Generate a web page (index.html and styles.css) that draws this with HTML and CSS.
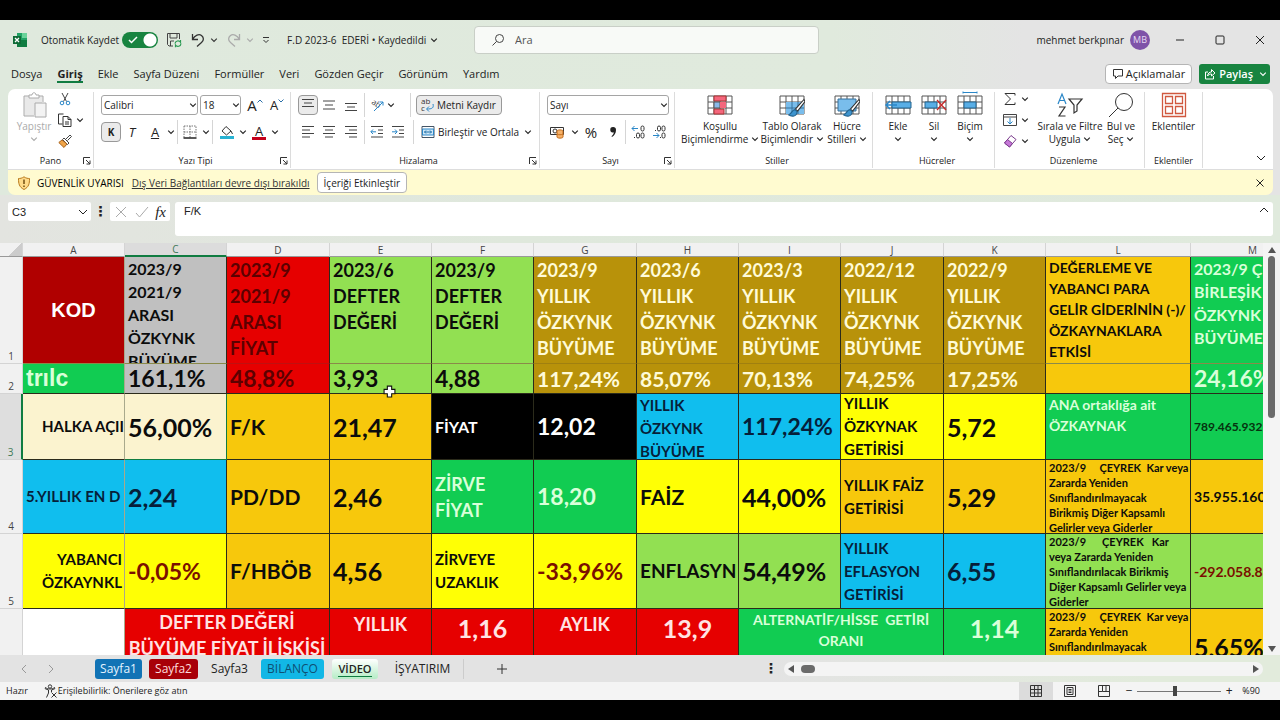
FILE: index.html
```html
<!DOCTYPE html>
<html lang="tr">
<head>
<meta charset="utf-8">
<title>F.D 2023-6 EDERİ</title>
<link rel="stylesheet" href="styles.css">
</head>
<body>
<svg class="defs" aria-hidden="true">
  <symbol id="chev" viewBox="0 0 8 8"><path d="M1.2 2.6 4 5.4 6.8 2.6" fill="none" stroke="currentColor" stroke-width="1.1"/></symbol>
  <symbol id="launch" viewBox="0 0 8 8"><path d="M.5 7V.5H7M3 3l4 4M7 3.5V7H3.5" fill="none" stroke="#333"/></symbol>
  <symbol id="grid" viewBox="0 0 26 20"><path d="M1 1h24v18H1zM1 7h24M1 13h24M7 1v18M13 1v18M19 1v18" fill="#fff" stroke="#555"/></symbol>
  <symbol id="brush" viewBox="0 0 16 18"><path d="M15 1 7 10l2 2 7-9z" fill="#fff" stroke="#333"/><path d="M6.500 10.500c-3 0-2.500 4-6 5 3 2 8 1.500 8-3z" fill="#3d94cf" stroke="#24648f"/></symbol>
</svg>
<div class="window">
  <header class="title">
    <div class="title-left">
      <svg class="i16" viewBox="0 0 16 16"><path d="M5 1h10v14H5z" fill="#21a366"/><path d="M10 1h5v5h-5z" fill="#6ad39a"/><path d="M5 8h10v7H5z" fill="#107c41"/><path d="M1 4h8v8H1z" fill="#0f6b37"/><path d="m3 6 4 4M7 6l-4 4" stroke="#fff" stroke-width="1.300"/></svg>
      <label class="auto" for="autosave">Otomatik Kaydet</label>
      <span class="switch"><input type="checkbox" id="autosave" checked><svg viewBox="0 0 10 8"><path d="m1 4 2.500 2.500L9 1" fill="none" stroke="#fff" stroke-width="1.500"/></svg></span>
      <button class="ic" aria-label="Kaydet"><svg class="i16" viewBox="0 0 16 16"><path d="M7 14H3L1.500 12.500v-11h12V7M4 1.500V6h7V1.500M4.500 14V9H8" fill="none" stroke="#444"/><path d="M9 11.500a3 3 0 0 1 5.500-1.200V8M15 11.500A3 3 0 0 1 9.500 13v2.200" fill="none" stroke="#2c9b54" stroke-width="1.200"/></svg></button>
      <button class="ic undo" aria-label="Geri Al"><svg class="i16" viewBox="0 0 16 16"><path d="M2.500 2v5.500H8M2.500 7.500C5 3 9 1.500 11.500 3.500s2.500 5 0 7L7 14.500" fill="none" stroke="#333" stroke-width="1.300"/></svg><svg class="chev"><use href="#chev"/></svg></button>
      <button class="ic undo pale" aria-label="Yinele"><svg class="i16" viewBox="0 0 16 16"><path d="M13.500 2v5.500H8M13.500 7.500C11 3 7 1.500 4.500 3.500s-2.500 5 0 7L9 14.500" fill="none" stroke="currentColor" stroke-width="1.300"/></svg><svg class="chev"><use href="#chev"/></svg></button>
      <button class="ic" aria-label="Özelleştir"><svg class="chev" viewBox="0 0 8 8"><path d="M1 1.500h6M1.500 4 4 6.500 6.500 4" fill="none" stroke="#333"/></svg></button>
      <button class="doc">F.D 2023-6&nbsp; EDERİ • Kaydedildi <svg class="chev"><use href="#chev"/></svg></button>
    </div>
    <label class="search"><svg class="i14" viewBox="0 0 14 14"><circle cx="8.500" cy="5.500" r="4" fill="none" stroke="#444"/><path d="M5.500 8.500 1.500 12.500" stroke="#444"/></svg><input type="text" placeholder="Ara" aria-label="Ara"></label>
    <div class="title-right">
      <span>mehmet berkpınar</span><span class="avatar">MB</span>
      <button class="win" aria-label="Simge durumu"><svg class="i12" viewBox="0 0 12 12"><path d="M2 6h8" stroke="#222"/></svg></button>
      <button class="win" aria-label="Ekranı kapla"><svg class="i12" viewBox="0 0 12 12"><rect x="2" y="2" width="8" height="8" rx="1" fill="none" stroke="#222"/></svg></button>
      <button class="win" aria-label="Kapat"><svg class="i12" viewBox="0 0 12 12"><path d="m2 2 8 8M10 2l-8 8" stroke="#222"/></svg></button>
    </div>
  </header>
  <nav class="menu">
    <button>Dosya</button><button class="on">Giriş</button><button>Ekle</button><button>Sayfa Düzeni</button><button>Formüller</button><button>Veri</button><button>Gözden Geçir</button><button>Görünüm</button><button>Yardım</button>
    <button class="comments"><svg class="i12" viewBox="0 0 12 12"><path d="M1.500 1.500h9v6.500H6L3.500 10.500V8h-2z" fill="none" stroke="#333"/></svg>Açıklamalar</button>
    <button class="share"><svg class="i12" viewBox="0 0 12 12"><path d="M4 4H1.500v7h8V8M3.500 8c.5-3 2-4 4-4V1.500l3.500 3.500-3.500 3V6c-2 0-3 .5-4 2z" fill="none" stroke="#fff"/></svg>Paylaş<svg class="chev"><use href="#chev"/></svg></button>
  </nav>

  <section class="ribbon">
    <div class="group g-pano">
      <div class="body">
        <button class="big w52 faded"><svg class="i26" viewBox="0 0 26 26"><path d="M9 4H3v20h10M17 4h5v6" fill="#eee" stroke="#aaa"/><path d="M4 5h17v6h-7v12H4z" fill="#e9e9e9"/><path d="M8 6V3h3c0-3 4-3 4 0h3v3z" fill="#fff" stroke="#aaa"/><path d="M14 11h11v14H14z" fill="#f3f3f3" stroke="#aaa"/></svg><span>Yapıştır</span><svg class="chev"><use href="#chev"/></svg></button>
        <div class="stack">
          <button class="s" aria-label="Kes"><svg class="i14" viewBox="0 0 14 14"><path d="m4 1 4.500 8.500M10 1 5.500 9.500" stroke="#444" fill="none"/><circle cx="4" cy="11" r="1.800" fill="none" stroke="#2a87c8"/><circle cx="10" cy="11" r="1.800" fill="none" stroke="#2a87c8"/></svg></button>
          <button class="s" aria-label="Kopyala"><svg class="i14" viewBox="0 0 14 14"><path d="M4.500 11H.5V1h5M5 3.500h5l3 3v7H5zM10 3.500v3h3M7 9h4M7 11h4" fill="none" stroke="#333"/></svg><svg class="chev"><use href="#chev"/></svg></button>
          <button class="s" aria-label="Biçim boyacısı"><svg class="i14" viewBox="0 0 14 14"><path d="m8 5 4-4 1.500 1.500-4 4" fill="#fff" stroke="#444"/><path d="m6 4 5 5-1.500 1.500-5-5z" fill="#fff" stroke="#444"/><path d="M4 6 .8 8.500 6 13.500 9 10z" fill="#f0a54a" stroke="#a8631c"/></svg></button>
        </div>
      </div>
      <div class="cap"><span>Pano</span><svg class="la"><use href="#launch"/></svg></div>
    </div>
    <div class="group g-font">
      <div class="rows">
        <div class="row"><span class="sel f1"><select aria-label="Yazı tipi"><option>Calibri</option></select><svg class="chev"><use href="#chev"/></svg></span><span class="sel f2"><select aria-label="Punto"><option>18</option></select><svg class="chev"><use href="#chev"/></svg></span><button class="b24 l14">A<svg class="mark" viewBox="0 0 6 4"><path d="M.5 3.500 3 1l2.500 2.500" fill="none" stroke="#2a6fa8"/></svg></button><button class="b20 l13">A<svg class="mark" viewBox="0 0 6 4"><path d="M.5.5 3 3 5.500.5" fill="none" stroke="#2a6fa8"/></svg></button></div>
        <div class="row"><button class="b20 boxed"><b>K</b></button><button class="b22 l13"><i>T</i></button><button class="b24 l13"><u>A</u></button><svg class="chev"><use href="#chev"/></svg><span class="sep"></span>
          <button class="b20" aria-label="Kenarlıklar"><svg class="i14" viewBox="0 0 14 14"><path d="M1 1h12v11M1 1v12M7 1v12M1 7h12" fill="none" stroke="#777" stroke-dasharray="1.500 1"/><path d="M.5 13h13" stroke="#222" stroke-width="1.500"/></svg></button><svg class="chev gapl"><use href="#chev"/></svg><span class="sep"></span>
          <button class="b24" aria-label="Dolgu rengi"><svg class="i14" viewBox="0 0 14 14"><path d="m6 1.500 5 4.500-4.500 4L2 6zM11 6l1.500 3" fill="none" stroke="#333"/><path d="M0 11h14v3H0z" fill="#29b3d3"/></svg></button><svg class="chev"><use href="#chev"/></svg>
          <button class="inkbtn l13">A</button><svg class="chev"><use href="#chev"/></svg></div>
      </div>
      <div class="cap"><span>Yazı Tipi</span><svg class="la"><use href="#launch"/></svg></div>
    </div>
    <div class="group g-align">
      <div class="rows">
        <div class="row"><button class="b20 boxed"><svg class="i14" viewBox="0 0 14 14"><path d="M1 1.500h12M3 5h8M1 8.500h12" stroke="#444"/></svg></button><button class="b22"><svg class="i14" viewBox="0 0 14 14"><path d="M1 3h12M3 7h8M1 11h12" stroke="#444"/></svg></button><button class="b22"><svg class="i14" viewBox="0 0 14 14"><path d="M1 5.500h12M3 9h8M1 12.500h12" stroke="#444"/></svg></button><span class="sep"></span><button class="b20"><svg class="i14" viewBox="0 0 14 14"><text x="0" y="8" font-size="8" transform="rotate(35 5 8)" fill="#333">ab</text><path d="M4 13 13 4M9.500 4H13v3.500" fill="none" stroke="#2a87c8"/></svg></button><svg class="chev"><use href="#chev"/></svg><span class="sep far"></span><button class="boxed wrap"><svg class="i14" viewBox="0 0 14 14"><text x="0" y="6" font-size="8" fill="#333">ab</text><text x="0" y="13" font-size="8" fill="#333">c</text><path d="M12 6c1 4-1 5-6 5M8 8.500 5.500 11 8 13.500" fill="none" stroke="#2a87c8"/></svg>Metni Kaydır</button></div>
        <div class="row"><button class="b20"><svg class="i14" viewBox="0 0 14 14"><path d="M1 1.500h12M1 5h8M1 8.500h12M1 12h8" stroke="#444"/></svg></button><button class="b22"><svg class="i14" viewBox="0 0 14 14"><path d="M1 1.500h12M3 5h8M1 8.500h12M3 12h8" stroke="#444"/></svg></button><button class="b22"><svg class="i14" viewBox="0 0 14 14"><path d="M1 1.500h12M5 5h8M1 8.500h12M5 12h8" stroke="#444"/></svg></button><span class="sep"></span><button class="b20"><svg class="i14" viewBox="0 0 14 14"><path d="M1 1.500h12M8 5h5M8 8.500h5M1 12h12" stroke="#444"/><path d="M6 6.800H1M3 4.500.8 6.800 3 9" fill="none" stroke="#2a87c8"/></svg></button><button class="b22"><svg class="i14" viewBox="0 0 14 14"><path d="M1 1.500h12M8 5h5M8 8.500h5M1 12h12" stroke="#444"/><path d="M1 6.800h5M4 4.500l2.200 2.300L4 9" fill="none" stroke="#2a87c8"/></svg></button><span class="sep near"></span><button class="merge"><svg class="i14" viewBox="0 0 14 14"><path d="M1 1.500h12v11H1z" fill="#fff" stroke="#456"/><path d="M1.500 4h11v6h-11z" fill="#cfe7f7" stroke="#2a87c8"/><path d="M3.500 7h7M5 5.500 3.500 7 5 8.500M9 5.500 10.500 7 9 8.500" fill="none" stroke="#1b6fa8"/></svg>Birleştir ve Ortala</button><svg class="chev"><use href="#chev"/></svg></div>
      </div>
      <div class="cap"><span>Hizalama</span><svg class="la"><use href="#launch"/></svg></div>
    </div>
    <div class="group g-num">
      <div class="rows">
        <div class="row"><span class="sel f3"><select aria-label="Sayı biçimi"><option>Sayı</option></select><svg class="chev"><use href="#chev"/></svg></span></div>
        <div class="row"><button class="b20 acct"><svg class="i14" viewBox="0 0 14 14"><path d="M.5 2.500h13v7H.5z" fill="#fff" stroke="#333"/><circle cx="5" cy="6" r="2" fill="none" stroke="#333"/><path d="M7 6c0-1.500 6-1.500 6 0v6c0 1.500-6 1.500-6 0z" fill="#f6b26b" stroke="#c66f1c"/><path d="M7 9c1 1 5 1 6 0" fill="none" stroke="#c66f1c"/></svg></button><svg class="chev"><use href="#chev"/></svg><button class="b24 l14">%</button><button class="b20" aria-label="Virgül stili"><svg class="i14" viewBox="0 0 14 14"><path d="M7 2a2.700 2.700 0 0 1 3 3c0 3-1.500 5.500-4 7l-.5-.8C7 10 7.800 8.500 7.800 7.200 5.500 8 4.300 6.500 4.300 5A2.700 2.700 0 0 1 7 2z" fill="#222"/></svg></button><span class="sep"></span><button class="b20" aria-label="Ondalık artır"><svg class="i14" viewBox="0 0 14 14"><path d="M7 3.500H1M3.500 1 1 3.500 3.500 6" fill="none" stroke="#2a87c8"/><g fill="none" stroke="#333"><rect x="10" y="1" width="3" height="5" rx="1.500"/><rect x="5.500" y="8" width="3" height="5" rx="1.500"/><rect x="10" y="8" width="3" height="5" rx="1.500"/></g><path d="M3 12h1v1H3z" fill="#333"/></svg></button><button class="b22" aria-label="Ondalık azalt"><svg class="i14" viewBox="0 0 14 14"><path d="M1 10.500h6M4.500 8 7 10.500 4.500 13" fill="none" stroke="#2a87c8"/><g fill="none" stroke="#333"><rect x="5.500" y="1" width="3" height="5" rx="1.500"/><rect x="10" y="1" width="3" height="5" rx="1.500"/><rect x="10" y="8" width="3" height="5" rx="1.500"/></g><path d="M3 5h1v1H3zM8 12h1v1H8z" fill="#333"/></svg></button></div>
      </div>
      <div class="cap"><span>Sayı</span><svg class="la"><use href="#launch"/></svg></div>
    </div>
    <div class="group g-style">
      <div class="body">
        <button class="big w76"><svg class="i26" viewBox="0 0 26 26"><use href="#grid" y="3" width="26" height="20"/><path d="M7 4h12v5H7zM7 17h10v5H7z" fill="#f4667c" stroke="#a33"/><path d="M7 10h6v6H7z" fill="#8ab9e8" stroke="#555"/><path d="M13 10h6v6h-6z" fill="#f4667c"/></svg><span>Koşullu<br>Biçimlendirme <svg class="chev"><use href="#chev"/></svg></span></button>
        <button class="big w68"><svg class="i26" viewBox="0 0 26 26"><use href="#grid" y="3" width="26" height="20"/><path d="M7 10h18v12H7z" fill="#79bdec"/><path d="M7 16h18M13 10v12M19 10v12" stroke="#37719b"/><use href="#brush" x="9" y="6" width="17" height="20"/></svg><span>Tablo Olarak<br>Biçimlendir <svg class="chev"><use href="#chev"/></svg></span></button>
        <button class="big w42"><svg class="i26" viewBox="0 0 26 26"><use href="#grid" y="3" width="26" height="20"/><path d="M4 7h18v12H4z" fill="#79bdec" stroke="#37719b"/><use href="#brush" x="9" y="6" width="17" height="20"/></svg><span>Hücre<br>Stilleri <svg class="chev"><use href="#chev"/></svg></span></button>
      </div>
      <div class="cap"><span>Stiller</span></div>
    </div>
    <div class="group g-cells">
      <div class="body">
        <button class="big w36"><svg class="i26" viewBox="0 0 26 26"><use href="#grid" y="3" width="26" height="20"/><path d="M7 10h19v6H7z" fill="#59aee6" stroke="#24648f"/><path d="M12 13H1M5 9l-4 4 4 4" fill="none" stroke="#2a87c8" stroke-width="1.500"/></svg><span>Ekle</span><svg class="chev"><use href="#chev"/></svg></button>
        <button class="big w36"><svg class="i26" viewBox="0 0 26 26"><use href="#grid" y="3" width="26" height="20"/><path d="M4 10h12v6H4z" fill="#59aee6" stroke="#24648f"/><path d="m16 8 9 10M25 8l-9 10" stroke="#c62828" stroke-width="1.300"/></svg><span>Sil</span><svg class="chev"><use href="#chev"/></svg></button>
        <button class="big w36"><svg class="i26" viewBox="0 0 26 26"><use href="#grid" y="3" width="26" height="20"/><path d="M7 10h12v6H7z" fill="#59aee6" stroke="#24648f"/><path d="M6 .5h14M6-.5v2M20-.5v2" stroke="#2a87c8"/></svg><span>Biçim</span><svg class="chev"><use href="#chev"/></svg></button>
      </div>
      <div class="cap"><span>Hücreler</span></div>
    </div>
    <div class="group g-edit">
      <div class="body">
        <div class="stack">
          <button class="s" aria-label="Toplam"><svg class="i14" viewBox="0 0 14 14"><path d="M12 3.500V1.500H2L7.500 7 2 12.500h10v-2" fill="none" stroke="#333"/></svg><svg class="chev"><use href="#chev"/></svg></button>
          <button class="s" aria-label="Doldur"><svg class="i14" viewBox="0 0 14 14"><path d="M.5 1.500h13v11H.5zM.5 4h13" fill="none" stroke="#444"/><path d="M7 5v6M4.500 8.500 7 11l2.500-2.500" fill="none" stroke="#2a87c8"/></svg><svg class="chev"><use href="#chev"/></svg></button>
          <button class="s" aria-label="Temizle"><svg class="i14" viewBox="0 0 14 14"><path d="m8 1.500 5 4-6.500 7.500-5-4z" fill="#fff" stroke="#7b3b8c"/><path d="m4.500 5.500 5 4L6.500 13l-5-4z" fill="#c678d8" stroke="#7b3b8c"/></svg><svg class="chev"><use href="#chev"/></svg></button>
        </div>
        <button class="big w70"><svg class="i26" viewBox="0 0 26 26"><path d="m1 12 4-10 4 10M2.500 8.500h5" fill="none" stroke="#2a87c8" stroke-width="1.200"/><path d="M2 15h6L2 24h6.500" fill="none" stroke="#333" stroke-width="1.200"/><path d="M12 7h13l-5 6v6l-3 2v-8z" fill="none" stroke="#333" stroke-width="1.200"/></svg><span>Sırala ve Filtre<br>Uygula <svg class="chev"><use href="#chev"/></svg></span></button>
        <button class="big w32"><svg class="i26" viewBox="0 0 26 26"><circle cx="16" cy="10" r="8.500" fill="none" stroke="#333"/><path d="M10 16 1 25" stroke="#333"/></svg><span>Bul ve<br>Seç <svg class="chev"><use href="#chev"/></svg></span></button>
      </div>
      <div class="cap"><span>Düzenleme</span></div>
    </div>
    <div class="group g-add">
      <div class="body"><button class="big w58"><svg class="i26" viewBox="0 0 26 26"><path d="M1.500 1.500h23v23h-23zM4.500 4.500h7v7h-7zM14.500 4.500h7v7h-7zM4.500 14.500h7v7h-7zM14.500 14.500h7v7h-7z" fill="none" stroke="#d0583f" stroke-width="1.300"/></svg><span>Eklentiler</span></button></div>
      <div class="cap"><span>Eklentiler</span></div>
    </div>
    <button class="collapse" aria-label="Şeridi daralt"><svg class="i12" viewBox="0 0 12 12"><path d="m2 4 4 4 4-4" fill="none" stroke="#222"/></svg></button>
  </section>
  <div class="warn">
    <svg class="i14" viewBox="0 0 14 14"><path d="M7 .8C9 2.300 11 2.500 12.500 2.500c0 5-.5 8.500-5.500 11C2 11 1.500 7.500 1.500 2.500 3 2.500 5 2.300 7 .8z" fill="#ffdc8a" stroke="#b8791c"/><path d="M7 3.500v4.500M7 9.500V11" stroke="#5c3a00" stroke-width="1.300"/></svg>
    <span class="alert">GÜVENLİK UYARISI</span><a href="#">Dış Veri Bağlantıları devre dışı bırakıldı</a><button class="enable">İçeriği Etkinleştir</button>
    <button class="close" aria-label="Kapat"><svg class="i12" viewBox="0 0 12 12"><path d="m2.500 2.500 7 7M9.500 2.500l-7 7" stroke="#222"/></svg></button>
  </div>
  <div class="formula">
    <label class="name"><input type="text" value="C3" aria-label="Ad kutusu"><svg class="i12" viewBox="0 0 12 12"><path d="m2 4 4 4 4-4" fill="none" stroke="#222"/></svg></label>
    <span class="dots">⋮</span>
    <div class="fx"><svg class="i14" viewBox="0 0 14 14"><path d="m2 2 10 10M12 2 2 12" stroke="#aaa"/></svg><svg class="i14" viewBox="0 0 14 14"><path d="m1 8 3.500 4L13 2" fill="none" stroke="#aaa"/></svg><i>fx</i></div>
    <label class="bar"><input type="text" value="F/K" aria-label="Formül"><svg class="i12" viewBox="0 0 12 12"><path d="m2 8 4-4 4 4" fill="none" stroke="#222"/></svg></label>
  </div>

  <main class="sheet">
    <div class="view">
      <table>
        <colgroup><col class="c0"><col class="cn"><col class="cn"><col class="cw"><col class="cn"><col class="cn"><col class="cw"><col class="cn"><col class="cn"><col class="cw"><col class="cn"><col class="cl"><col class="cm"></colgroup>
        <thead><tr><th class="corner"></th><th>A</th><th class="on">C</th><th>D</th><th>E</th><th>F</th><th>G</th><th>H</th><th>I</th><th>J</th><th>K</th><th>L</th><th>M</th></tr></thead>
        <tbody>
        <tr class="r1"><th><div>1</div></th>
          <td class="maroon"><div class="mid cen kod">KOD</div></td>
          <td class="gray"><div class="t16">2023/9
2021/9
ARASI
ÖZKYNK
BÜYÜME</div></td>
          <td class="red dark"><div class="t18">2023/9
2021/9
ARASI
FİYAT</div></td>
          <td class="lime"><div class="t18">2023/6
DEFTER
DEĞERİ</div></td>
          <td class="lime"><div class="t18">2023/9
DEFTER
DEĞERİ</div></td>
          <td class="gold"><div class="t18">2023/9
YILLIK
ÖZKYNK
BÜYÜME</div></td>
          <td class="gold"><div class="t18">2023/6
YILLIK
ÖZKYNK
BÜYÜME</div></td>
          <td class="gold"><div class="t18">2023/3
YILLIK
ÖZKYNK
BÜYÜME</div></td>
          <td class="gold"><div class="t18">2022/12
YILLIK
ÖZKYNK
BÜYÜME</div></td>
          <td class="gold"><div class="t18">2022/9
YILLIK
ÖZKYNK
BÜYÜME</div></td>
          <td class="amber"><div class="t14">DEĞERLEME VE
YABANCI PARA
GELİR GİDERİNİN (-)/
ÖZKAYNAKLARA
ETKİSİ</div></td>
          <td class="green"><div class="t16">2023/9 Ç
BİRLEŞİK
ÖZKYNK
BÜYÜME</div></td></tr>
        <tr class="r2"><th><div>2</div></th>
          <td class="green"><div class="mid tri">trılc</div></td>
          <td class="gray"><div class="mid t23">161,1%</div></td><td class="red dark"><div class="mid t23">48,8%</div></td><td class="lime"><div class="mid t23">3,93</div></td><td class="lime"><div class="mid t23">4,88</div></td>
          <td class="gold"><div class="mid t21">117,24%</div></td><td class="gold"><div class="mid t21">85,07%</div></td><td class="gold"><div class="mid t21">70,13%</div></td><td class="gold"><div class="mid t21">74,25%</div></td><td class="gold"><div class="mid t21">17,25%</div></td>
          <td class="amber"><div></div></td><td class="green"><div class="mid t23">24,16%</div></td></tr>
        <tr class="r3"><th class="on"><div>3</div></th>
          <td class="cream"><div class="mid t15 in">HALKA AÇII</div></td><td class="cream picked"><div class="mid t25">56,00%</div></td>
          <td class="amber"><div class="mid t21">F/K</div></td><td class="amber"><div class="mid t25">21,47</div></td>
          <td class="black"><div class="mid t16">FİYAT</div></td><td class="black"><div class="mid t23">12,02</div></td>
          <td class="blue"><div class="t15">YILLIK
ÖZKYNK
BÜYÜME</div></td><td class="blue"><div class="mid t23">117,24%</div></td>
          <td class="yellow"><div class="mid t15">YILLIK
ÖZKYNAK
GETİRİSİ</div></td><td class="yellow"><div class="mid t25">5,72</div></td>
          <td class="green"><div class="t14">ANA ortaklığa ait
ÖZKAYNAK</div></td><td class="green ink"><div class="mid t12">789.465.932</div></td></tr>
        <tr class="r4"><th><div>4</div></th>
          <td class="blue"><div class="mid t15">5.YILLIK EN D</div></td><td class="blue"><div class="mid t25">2,24</div></td>
          <td class="amber"><div class="mid t21">PD/DD</div></td><td class="amber"><div class="mid t25">2,46</div></td>
          <td class="green"><div class="mid t18">ZİRVE
FİYAT</div></td><td class="green"><div class="mid t23">18,20</div></td>
          <td class="yellow"><div class="mid t21">FAİZ</div></td><td class="yellow"><div class="mid t25">44,00%</div></td>
          <td class="amber"><div class="mid t15">YILLIK FAİZ
GETİRİSİ</div></td><td class="amber"><div class="mid t25">5,29</div></td>
          <td class="amber"><div class="t11">2023/9     ÇEYREK  Kar veya
Zararda Yeniden
Sınıflandırılmayacak
Birikmiş Diğer Kapsamlı
Gelirler veya Giderler</div></td><td class="amber"><div class="mid t14">35.955.160</div></td></tr>
        <tr class="r5"><th><div>5</div></th>
          <td class="yellow"><div class="mid t15 right">YABANCI
ÖZKAYNKL</div></td><td class="yellow neg"><div class="mid t23">-0,05%</div></td>
          <td class="amber"><div class="mid t21">F/HBÖB</div></td><td class="amber"><div class="mid t25">4,56</div></td>
          <td class="yellow"><div class="mid t15">ZİRVEYE
UZAKLIK</div></td><td class="yellow neg"><div class="mid t23">-33,96%</div></td>
          <td class="lime"><div class="mid t19">ENFLASYN</div></td><td class="lime"><div class="mid t25">54,49%</div></td>
          <td class="blue"><div class="mid t15">YILLIK
EFLASYON
GETİRİSİ</div></td><td class="blue"><div class="mid t25">6,55</div></td>
          <td class="lime"><div class="t11">2023/9      ÇEYREK   Kar
veya Zararda Yeniden
Sınıflandırılacak Birikmiş
Diğer Kapsamlı Gelirler veya
Giderler</div></td><td class="lime neg"><div class="mid t14">-292.058.8</div></td></tr>
        <tr class="r6"><th><div>6</div></th>
          <td class="white"><div></div></td><td class="red" colspan="2"><div class="cen t18">DEFTER DEĞERİ
BÜYÜME FİYAT İLİŞKİSİ</div></td>
          <td class="red"><div class="cen t18 drop">YILLIK</div></td><td class="red"><div class="cen t25">1,16</div></td><td class="red"><div class="cen t18 drop">AYLIK</div></td><td class="red"><div class="cen t25">13,9</div></td>
          <td class="green" colspan="2"><div class="cen t14">ALTERNATİF/HİSSE  GETİRİ
ORANI</div></td><td class="green"><div class="cen t25">1,14</div></td>
          <td class="amber"><div class="t11">2023/9     ÇEYREK  Kar veya
Zararda Yeniden
Sınıflandırılmayacak
Birikmiş Diğer Kapsamlı</div></td><td class="amber"><div class="mid t25">5,65%</div></td></tr>
        </tbody>
      </table>
      <svg class="cursor" viewBox="0 0 12 12"><path d="M4 1h4v3h3v4H8v3H4V8H1V4h3z" fill="#fff" stroke="#111"/></svg>
    </div>
    <div class="vscroll"><svg viewBox="0 0 8 6"><path d="M4 0 8 6H0z" fill="#555"/></svg><span></span><svg viewBox="0 0 8 6"><path d="M0 0h8L4 6z" fill="#555"/></svg></div>
  </main>
  <footer class="tabs">
    <div class="arrows"><svg class="i12" viewBox="0 0 12 12"><path d="M8 2 4 6l4 4" fill="none" stroke="#999"/></svg><svg class="i12" viewBox="0 0 12 12"><path d="m4 2 4 4-4 4" fill="none" stroke="#999"/></svg></div>
    <button class="tb">Sayfa1</button><button class="tr">Sayfa2</button><button class="tn">Sayfa3</button><button class="tc">BİLANÇO</button><button class="tv"><span>VİDEO</span></button><button class="tn last">İŞYATIRIM</button>
    <button class="plus" aria-label="Yeni sayfa"><svg class="i12" viewBox="0 0 12 12"><path d="M6 1v10M1 6h10" stroke="#333"/></svg></button>
    <span class="dots">⋮</span>
    <div class="hscroll"><svg class="tri6" viewBox="0 0 6 8"><path d="M6 0v8L0 4z" fill="#555"/></svg><span></span><svg class="tri6" viewBox="0 0 6 8"><path d="M0 0v8l6-4z" fill="#555"/></svg></div>
  </footer>
  <div class="status">
    <span>Hazır</span>
    <svg class="i14 acc" viewBox="0 0 14 14"><circle cx="6" cy="2.500" r="1.700" fill="none" stroke="#333"/><path d="M.8 4.500 4.500 6v3l-2 4.500M11.200 4.500 7.500 6v2M1 3.500c4 2 6 2 10 0M7.500 8.500l5 5M12.500 8.500l-5 5" fill="none" stroke="#333"/></svg><span>Erişilebilirlik: Önerilere göz atın</span>
    <div class="views">
      <button class="v on" aria-label="Normal"><svg class="i12" viewBox="0 0 12 12"><path d="M.5.5h11v11H.5zM.5 4.500h11M.5 8h11M4.500.5v11M8 .5v11" fill="none" stroke="#333"/></svg></button>
      <button class="v" aria-label="Sayfa düzeni"><svg class="i12" viewBox="0 0 12 12"><path d="M.5.5h11v11H.5zM3 2.500h6v7H3zM4.500 4.500h3M4.500 6h3M4.500 7.500h3" fill="none" stroke="#333"/></svg></button>
      <button class="v" aria-label="Sayfa sonu"><svg class="i12" viewBox="0 0 12 12"><path d="M.5.5h11v11H.5zM4.500.5v6h7M8 .5v6M.5 6.500h4" fill="none" stroke="#333"/></svg></button>
    </div>
    <span class="pm">−</span><input type="range" min="0" max="100" value="45" aria-label="Yakınlaştırma"><span class="pm">+</span><span class="pct">%90</span>
  </div>
</div>
</body>
</html>
```
FILE: styles.css
```css
* { box-sizing: border-box; }
body { margin: 0; background: #000; color: #222; font: 11px/14px "Open Sans", "Noto Sans", sans-serif; }
button, input, select { font: inherit; color: inherit; margin: 0; padding: 0; border: 0; background: none; }
svg { flex: none; overflow: visible; }
.defs { position: absolute; width: 0; height: 0; }
.i12 { width: 12px; height: 12px; }
.i14 { width: 14px; height: 14px; }
.i16 { width: 16px; height: 16px; }
.i26 { width: 26px; height: 26px; }
.chev { width: 8px; height: 8px; }

.window { height: 100vh; border: solid #000; border-width: 20px 0; display: flex; flex-direction: column; overflow: hidden; background: linear-gradient(90deg, #dfe9dd, #e0eadd 65%, #e4e4e4 80%); }

.title { height: 40px; display: flex; align-items: center; font-size: 10px; flex: none; }
.title-left { flex: 0 0 474px; display: flex; align-items: center; padding-left: 12px; }
.auto { margin: 0 3px 0 13px; white-space: nowrap; }
.switch { position: relative; width: 36px; height: 16px; }
.switch input { appearance: none; display: block; width: 36px; height: 16px; border-radius: 8px; background: radial-gradient(circle at 28px 8px, #fff 6px, #188440 7px); }
.switch svg { position: absolute; left: 6px; top: 4px; width: 10px; height: 8px; }
.ic { display: flex; align-items: center; margin-left: 8px; gap: 4px; }
.undo svg.chev { color: #333; }
.pale, .undo.pale svg.chev { color: #aaa; }
.doc { margin-left: 17px; display: flex; align-items: center; gap: 4px; white-space: nowrap; }
.search { flex: 0 1 345px; height: 28px; background: #f8faf7; border: 1px solid #c9cfc7; border-radius: 4px; display: flex; align-items: center; gap: 10px; padding-left: 16px; }
.search input { font-size: 11px; width: 100%; }
.search input::placeholder { color: #555; opacity: 1; }
.title-right { margin-left: auto; display: flex; align-items: center; }
.avatar { width: 20px; height: 20px; line-height: 20px; font-size: 9px; border-radius: 50%; background: #7e52a8; color: #e6d8f2; text-align: center; margin: 0 10px 0 6px; }
.win { width: 40px; display: flex; justify-content: center; }

.menu { height: 29px; flex: none; display: flex; align-items: center; gap: 15px; padding: 0 10px 2px 11px; }
.menu button { white-space: nowrap; }
.menu .on { font-weight: 700; border-bottom: 2px solid #107c41; margin-top: 2px; }
.menu .comments { margin-left: auto; background: #fff; border: 1px solid #b5b5b5; border-radius: 4px; height: 20px; padding: 0 6px; display: flex; align-items: center; gap: 2px; }
.menu .share { background: #188440; color: #fff; font-weight: 600; border-radius: 3px; height: 20px; padding: 0 3px 0 5px; display: flex; align-items: center; gap: 3px; margin-left: -8px; }
.share .chev { margin-left: 3px; }

.ribbon { height: 80px; flex: none; margin: 0 7px 0 8px; background: #fff; border-radius: 7px 7px 0 0; display: flex; padding-top: 3px; font-size: 10px; }
.group { flex: none; border-right: 1px solid #dcdcdc; display: flex; flex-direction: column; height: 76px; }
.body { height: 60px; display: flex; align-items: flex-start; }
.cap { height: 14px; line-height: 14px; font-size: 9px; display: flex; justify-content: center; align-items: center; margin-top: 5px; position: relative; }
.la { position: absolute; right: 2px; top: 3px; width: 8px; height: 8px; }
.g-pano { width: 86px; }
.g-font { width: 197px; padding-left: 7px; }
.g-align { width: 249px; padding-left: 7px; }
.g-num { width: 135px; padding-left: 7px; }
.g-style { width: 198px; padding-left: 7px; }
.g-cells { width: 122px; padding-left: 7px; }
.g-edit { width: 150px; padding-left: 8px; }
.g-add { width: 58px; }
.big { display: flex; flex-direction: column; align-items: center; line-height: 13px; white-space: nowrap; gap: 2px; text-align: center; }
.big span { display: block; }
.w32 { width: 32px; } .w36 { width: 36px; } .w42 { width: 42px; } .w52 { width: 52px; } .w58 { width: 58px; } .w68 { width: 68px; } .w70 { width: 70px; } .w76 { width: 76px; }
.faded { color: #aaa; }
.stack { width: 32px; flex: none; display: flex; flex-direction: column; gap: 7px; }
.g-pano .stack { margin-left: -2px; }
.s { display: flex; align-items: center; gap: 4px; }
.rows { height: 60px; padding-top: 3px; display: flex; flex-direction: column; gap: 7px; }
.row { height: 20px; display: flex; align-items: center; }
.row > button { display: flex; align-items: center; justify-content: center; height: 20px; flex: none; white-space: nowrap; }
.b20 { width: 20px; } .b22 { width: 22px; } .b24 { width: 24px; }
.l13 { font-size: 13px; } .l14 { font-size: 15px; }
.mark { width: 6px; height: 4px; margin-bottom: 9px; }
.row > .inkbtn { line-height: 14px; height: 15px; width: 14px; margin: 0 5px; border-bottom: 3px solid #c4001a; }
.gapl { margin-left: 2px; }
.acct { margin-right: 4px; }
.boxed { background: #ebebeb; border: 1px solid #999; border-radius: 4px; }
.row .wrap { padding: 0 5px 0 4px; gap: 2px; margin-left: 5px; }
.row .merge { gap: 3px; margin-right: 5px; }
.sep { width: 1px; height: 24px; background: #d5d5d5; margin: 0 2px; }
.sep.far { margin-left: 15px; margin-right: 0; }
.sep.near { margin-left: 4px; margin-right: 7px; }
.sel { position: relative; height: 20px; margin-right: 2px; }
.sel select { appearance: none; width: 100%; height: 20px; border: 1px solid #a5a5a5; border-radius: 3px; padding-left: 2px; background: #fff; }
.sel .chev { position: absolute; right: 1px; top: 6px; pointer-events: none; }
.f1 { width: 97px; } .f2 { width: 41px; } .f3 { width: 122px; }
.collapse { margin: auto 6px 5px auto; display: flex; }

.warn { height: 26px; flex: none; margin: 0 7px 0 8px; border-top: 1px solid #ddd; background: #fffbd0; border-radius: 0 0 7px 7px; display: flex; align-items: center; font-size: 10px; padding: 0 7px 0 9px; }
.alert { margin: 0 8px 0 6px; color: #000; }
.warn a { color: #333; }
.enable { background: #fff; border: 1px solid #b5b5b5; border-radius: 4px; height: 21px; padding: 0 6px; margin-left: 7px; white-space: nowrap; }
.close { margin-left: auto; display: flex; }

.formula { flex: none; height: 48px; padding: 7px 7px 7px 8px; display: flex; align-items: flex-start; background: linear-gradient(90deg, #e3e4e0, #dfe8dc 40%, #e0eadd); }
.name { width: 83px; height: 19px; background: #fff; display: flex; align-items: center; padding: 0 2px 0 4px; border-radius: 2px; }
.name input { width: 100%; min-width: 0; flex: 1; font-family: "Liberation Sans", sans-serif; }
.dots { width: 19px; text-align: center; font: 700 14px/19px "DejaVu Sans", sans-serif; flex: none; }
.fx { width: 60px; height: 19px; background: #fff; display: flex; align-items: center; justify-content: space-between; padding: 0 4px; border-radius: 2px; }
.fx i { font: italic 15px/18px "Liberation Serif", serif; }
.bar { margin-left: 5px; flex: 1; height: 34px; background: #fff; border-radius: 3px; display: flex; align-items: flex-start; padding: 2px 3px 0 9px; }
.bar input { flex: 1; font-family: "Liberation Sans", sans-serif; }

.sheet { flex: 1; min-height: 0; display: flex; background: #f1f1f1; }
.view { flex: 1; min-width: 0; overflow: hidden; position: relative; }
table { table-layout: fixed; width: 1315px; border-collapse: separate; border-spacing: 0; font: 700 16px/23px Lato, sans-serif; color: #0c0c0c; }
.c0 { width: 23px; } .cn { width: 102px; } .cw { width: 103px; } .cl { width: 145px; } .cm { width: 124px; }
th { padding: 0; background: #f1f1f1; font: 400 10px/14px "Open Sans", sans-serif; color: #444; border-right: 1px solid #d4d4d4; }
thead th { height: 14px; border-bottom: 1px solid #999; line-height: 12px; }
thead th.on { background: #dcdcdc; color: #3e7a57; border-bottom: 2px solid #107c41; }
.corner { background: linear-gradient(135deg, #f1f1f1 60%, #ccc 61%); }
tbody th { vertical-align: bottom; border-bottom: 1px solid #d4d4d4; overflow: hidden; }
tbody th.on { background: #dedede; color: #3e7a57; border-right: 2px solid #107c41; }
td { padding: 0; border-right: 1px solid #2b2b1b; border-bottom: 1px solid #2b2b1b; vertical-align: top; }
td:nth-child(2) { border-right-color: #a9a98c; }
td > div { overflow: hidden; white-space: pre; padding-left: 3px; }
tbody th > div { display: flex; flex-direction: column; justify-content: flex-end; overflow: hidden; }
.r1 div { height: 106px; } .r2 div { height: 29px; } .r3 div { height: 65px; } .r4 div { height: 73px; } .r5 div { height: 74px; } .r6 div { height: 76px; }
.r1 td { border-bottom-color: #8a8a4a; }
.r1 .red { border-bottom-color: #c01010; }
.r1 .gold { border-bottom-color: #a08010; }
td > .mid { display: flex; flex-direction: column; justify-content: center; }
td > .cen { text-align: center; padding: 0; }
td > .right { text-align: right; padding-right: 2px; align-items: stretch; }
td > .in { padding-left: 19px; }
.t11 { font-size: 11px; line-height: 15px; }
.t12 { font-size: 12px; line-height: 16px; }
.t14 { font-size: 14px; line-height: 21px; }
.t15 { font-size: 15px; line-height: 23px; }
.t16 { font-size: 16px; line-height: 23px; }
.t18 { font-size: 18px; line-height: 26px; }
.t19 { font-size: 19px; line-height: 28px; }
.t21 { font-size: 21px; line-height: 28px; }
.t23 { font-size: 23px; line-height: 29px; }
.t25 { font-size: 25px; line-height: 38px; }
.drop { line-height: 30px; }
.kod { font: 700 20px/26px "Liberation Sans", sans-serif; color: #fff; }
.tri { font: 700 23px/27px "Liberation Sans", sans-serif; color: #d9ffd9; }
.maroon { background: #b00000; } .gray { background: #c0c0c0; } .red { background: #e60000; color: #ffe3e3; }
.dark { color: #5c0000; } .lime { background: #92e052; } .gold { background: #b8920a; color: #fffbd8; }
.amber { background: #f7c80c; } .green { background: #11cc52; color: #d9ffd9; } .ink { color: #06330f; }
.cream { background: #fbf3cf; } .black { background: #000; color: #fff; } .blue { background: #10beee; color: #061f3a; }
.yellow { background: #ffff05; } .white { background: #fff; } .neg { color: #7a0f00; }
.picked { border-right-color: #107c41; border-bottom-color: #107c41; }
.cursor { position: absolute; left: 383px; top: 142px; width: 13px; height: 13px; }
.vscroll { width: 17px; display: flex; flex-direction: column; align-items: center; padding: 4px 0 3px; background: #f4f4f4; }
.vscroll svg { width: 8px; height: 6px; }
.vscroll span { width: 7px; height: 162px; border-radius: 4px; background: #6b6b6b; margin: 3px 0 auto; }

.tabs { height: 27px; flex: none; display: flex; align-items: center; background: linear-gradient(90deg, #e3e3e3 60%, #e2ebdc 90%); padding-right: 17px; }
.tabs button { flex: none; height: 20px; font-size: 12px; border-radius: 3px; display: flex; align-items: center; justify-content: center; }
.arrows { width: 95px; padding-left: 18px; display: flex; gap: 15px; flex: none; }
.tabs .tb { background: #1173b5; color: #e4f3ff; width: 47px; }
.tabs .tr { background: #a80008; color: #ffdede; width: 49px; margin-left: 7px; }
.tabs .tn { width: 63px; }
.tabs .tc { background: #12b7e6; color: #0e4f73; width: 63px; }
.tabs .tv { background: linear-gradient(#fff, #b5ecc5); width: 46px; margin-left: 8px; font-weight: 600; font-size: 11px; }
.tv span { border-bottom: 1px solid #107c41; line-height: 15px; }
.tabs .last { width: 82px; margin-left: 4px; border-right: 1px solid #ccc; border-radius: 0; }
.tabs .plus { width: 76px; }
.tabs .dots { margin-left: auto; width: 26px; }
.hscroll { flex: 0 1 479px; height: 14px; border-radius: 7px; background: #f4f4f4; display: flex; align-items: center; padding: 0 4px; }
.tri6 { width: 6px; height: 8px; }
.hscroll span { width: 14px; height: 8px; border-radius: 4px; background: #6b6b6b; margin: 0 auto 0 7px; }

.status { height: 18px; flex: none; background: #f4f4f4; display: flex; align-items: center; font-size: 9px; padding: 0 20px 0 6px; }
.acc { margin: 0 0 0 16px; }
.views { margin-left: auto; display: flex; }
.v { width: 34px; height: 18px; display: flex; align-items: center; justify-content: center; }
.v.on { background: #dcdcdc; }
.pm { width: 16px; text-align: center; font-size: 12px; }
.status input { appearance: none; width: 84px; height: 10px; background: linear-gradient(#777, #777) center / 100% 1px no-repeat; }
.status input::-webkit-slider-thumb { appearance: none; width: 4px; height: 10px; background: #444; }
.pct { margin-left: 5px; }
```
